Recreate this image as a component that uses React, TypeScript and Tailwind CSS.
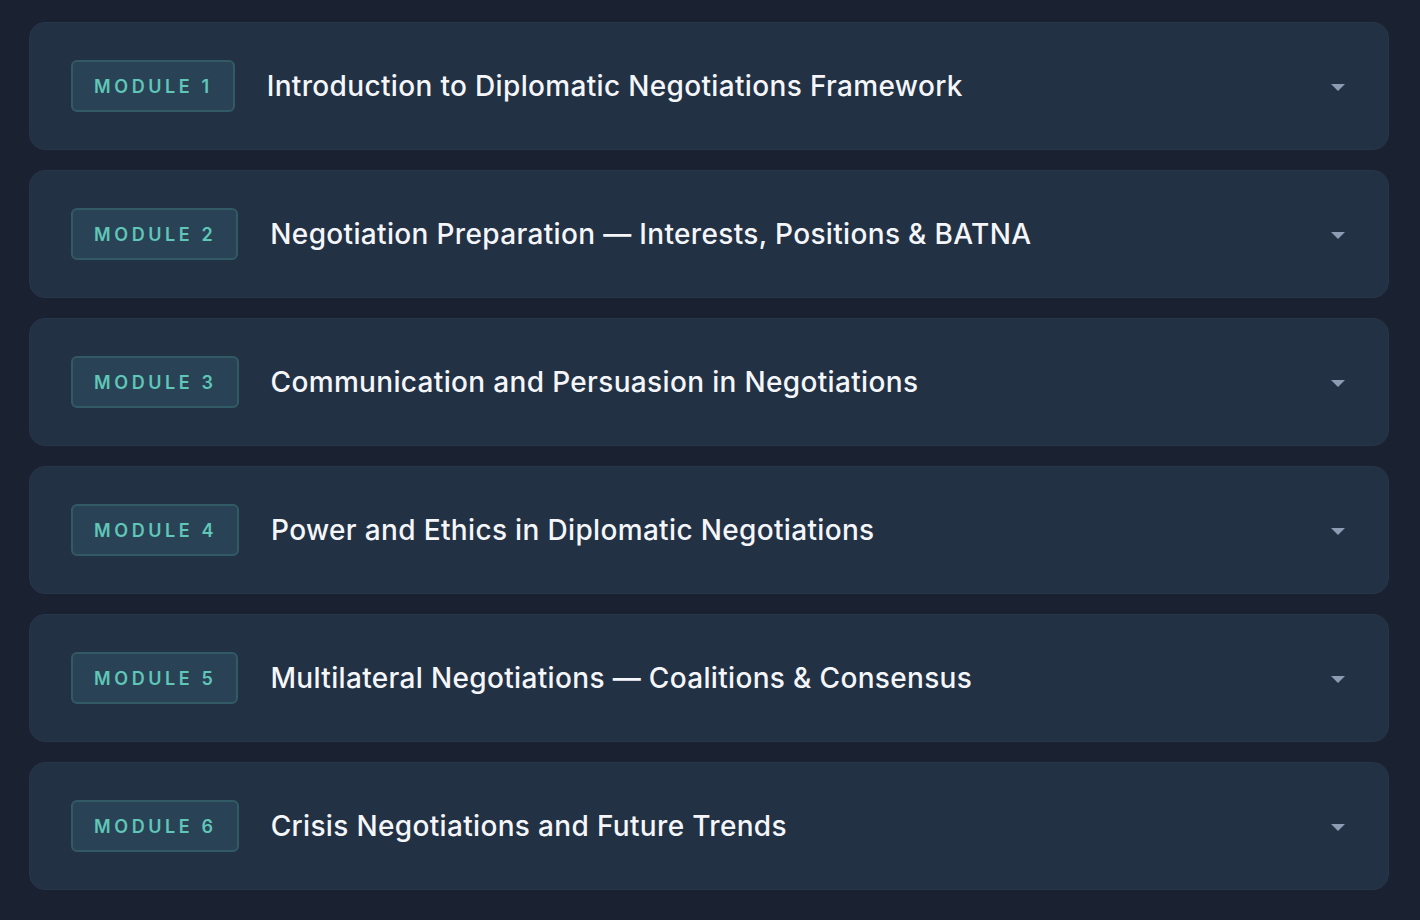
import React from 'react';

const modules = [
  'Introduction to Diplomatic Negotiations Framework',
  'Negotiation Preparation — Interests, Positions & BATNA',
  'Communication and Persuasion in Negotiations',
  'Power and Ethics in Diplomatic Negotiations',
  'Multilateral Negotiations — Coalitions & Consensus',
  'Crisis Negotiations and Future Trends',
];

export default function App() {
  return (
    <div
      className="min-h-screen w-full bg-[#1a2231] pl-[29px] pr-[31px] pt-[22px] pb-[30px]"
      style={{ fontFamily: 'Inter, "Noto Sans", sans-serif' }}
    >
      <div className="flex flex-col gap-5">
        {modules.map((title, i) => (
          <div
            key={i}
            className="flex h-[128px] items-center rounded-2xl border border-[#27354a] bg-[#233145] pl-[41px] pr-[42px]"
          >
            <span className="flex h-[52px] items-center rounded-md border-2 border-[#325a64] bg-[#2a4256] pl-[21px] pr-[20px] text-[18px] font-semibold tracking-[0.2em] text-[#5fc6b8]">
              MODULE {i + 1}
            </span>
            <span className="ml-8 flex-1 text-[28px] font-medium tracking-[0.012em] text-[#f4f6fa]">{title}</span>
            <svg width="16" height="8" viewBox="0 0 16 8" className="mt-[4px] text-[#8c9db3]">
              <path d="M1 0h14l-7 7z" fill="currentColor" />
            </svg>
          </div>
        ))}
      </div>
    </div>
  );
}
